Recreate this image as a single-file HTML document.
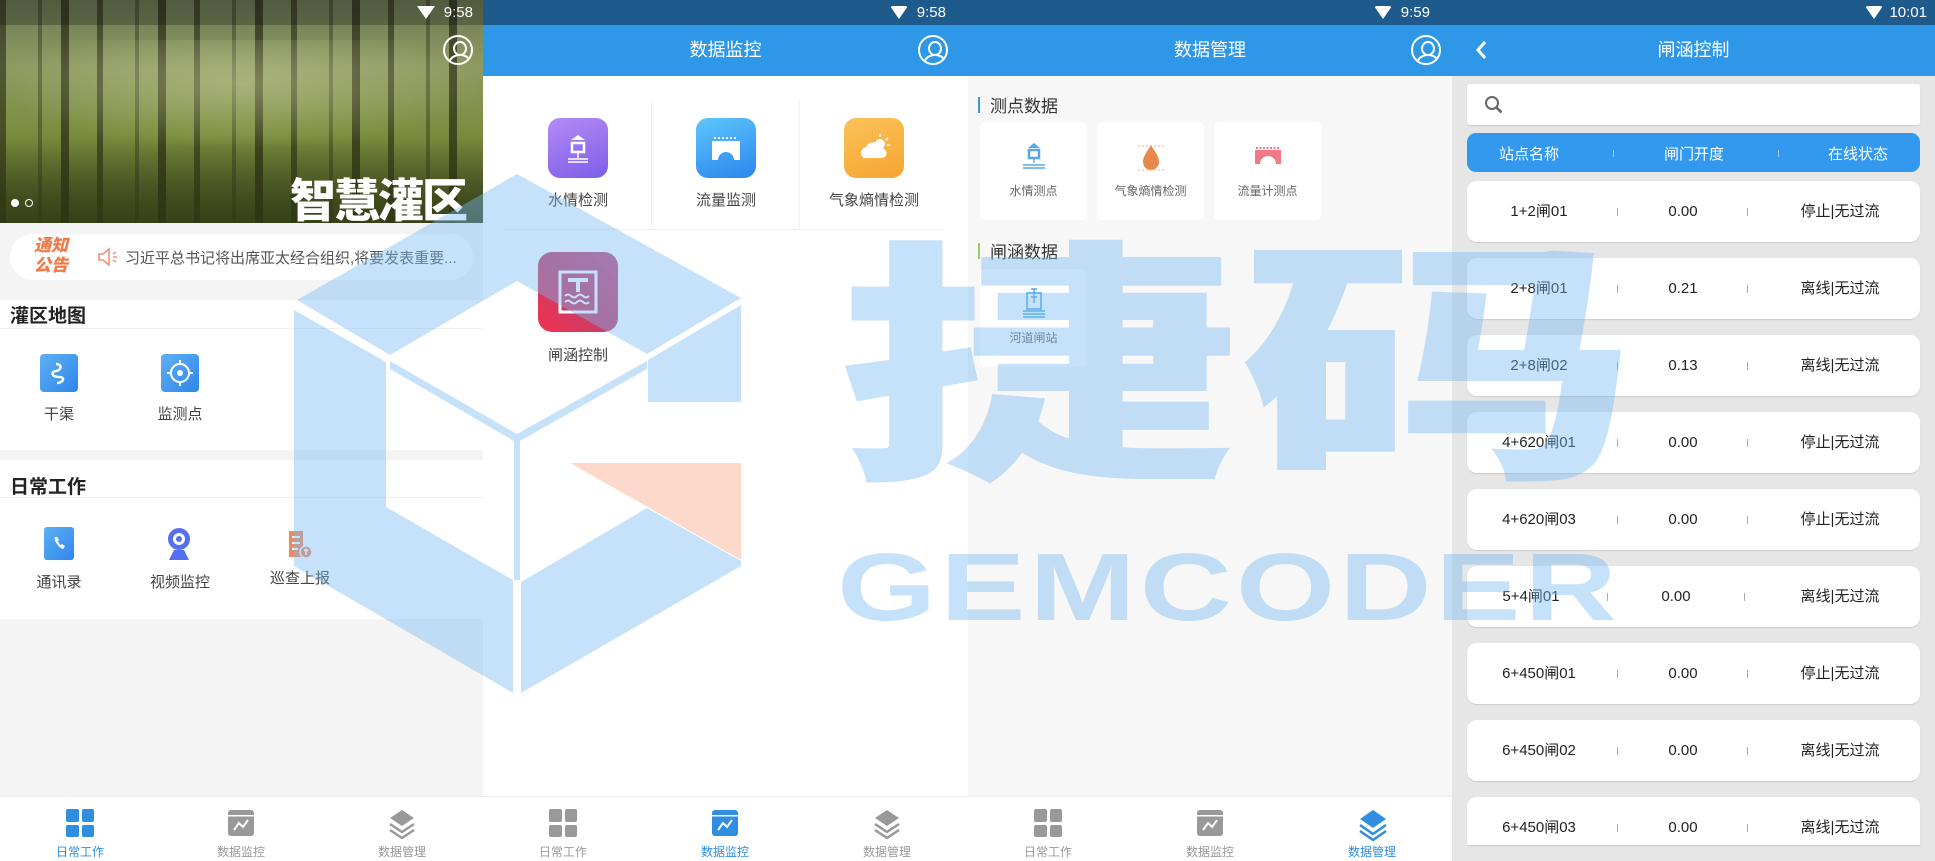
<!DOCTYPE html>
<html><head><meta charset="utf-8"><style>
*{margin:0;padding:0;box-sizing:border-box}
body{width:1935px;height:861px;overflow:hidden;position:relative;background:#fff;font-family:"Liberation Sans","Noto Sans CJK SC",sans-serif;color:#333}
.a{position:absolute}
.panel{position:absolute;top:0;height:861px;overflow:hidden}
.sb{position:absolute;left:0;top:0;width:100%;height:25px;background:#1e5a8c;color:#fff;font-size:15px}
.sb .t{position:absolute;right:10px;top:4px}
.sb .w{position:absolute;right:48px;top:6px;width:0;height:0;border-left:9px solid transparent;border-right:9px solid transparent;border-top:13px solid #fff;border-radius:3px}
.hd{position:absolute;left:0;top:25px;width:100%;height:51px;background:#2f97e8;color:#fff;font-size:18px;text-align:center;line-height:51px}
.av{position:absolute;width:30px;height:30px;border:2px solid #fff;border-radius:50%;overflow:hidden}
.av:before{content:"";position:absolute;left:8px;top:4px;width:10px;height:11px;border:2px solid #fff;border-radius:50%}
.av:after{content:"";position:absolute;left:3px;top:17px;width:20px;height:16px;border:2px solid #fff;border-radius:50%}
.nav{position:absolute;left:0;top:796px;width:100%;height:65px;background:#fff;border-top:1px solid #eee}
.ni{position:absolute;top:12px;width:60px;margin-left:-30px;text-align:center;font-size:12px;color:#999}
.ni .ic{width:28px;height:28px;margin:0 auto 6px;position:relative}
.g4{display:grid;grid-template-columns:1fr 1fr;gap:3px}
.g4 i{display:block;background:#999;border-radius:2px}
.on{color:#2f8ee0}
.on .g4 i{background:#2f8ee0}
.lbl{position:absolute;text-align:center;font-size:15px;color:#444;width:120px;margin-left:-60px}
.row{position:absolute;left:15px;width:453px;height:61px;background:#fff;border-radius:10px;box-shadow:0 1px 1px #ccc;font-size:15px;color:#222}
.row span{position:absolute;top:0;line-height:61px;transform:translateX(-50%);white-space:nowrap}
.row b{position:absolute;top:27px;width:1px;height:8px;background:#aaa}
.hc{position:absolute;top:10px;transform:translateX(-50%);white-space:nowrap}
</style></head><body>

<!-- PANEL 1 -->
<div class="panel" style="left:0;width:483px;background:#f4f4f4">
  <div class="a" style="left:0;top:0;width:483px;height:223px;background:linear-gradient(180deg,#6d7a55 0%,#8f9a62 30%,#7b8c3e 60%,#3f4a1e 100%)"></div>
  <div class="a" style="left:0;top:0;width:483px;height:223px;background:repeating-linear-gradient(90deg,rgba(30,30,15,.55) 0 6px,transparent 6px 38px,rgba(40,40,20,.4) 38px 42px,transparent 42px 61px,rgba(25,25,10,.6) 61px 69px,transparent 69px 97px)"></div>
  <div class="a" style="left:0;top:40px;width:483px;height:110px;background:radial-gradient(ellipse at 50% 40%,rgba(215,220,170,.4),transparent 70%)"></div>
  <div class="a" style="left:0;top:140px;width:483px;height:83px;background:linear-gradient(180deg,transparent,rgba(50,60,20,.65))"></div>
  <div class="a" style="left:0;top:0;width:483px;height:25px;background:rgba(0,0,0,.25);color:#fff;font-size:15px"><span class="a" style="right:10px;top:4px">9:58</span><span class="a" style="right:48px;top:6px;border-left:9px solid transparent;border-right:9px solid transparent;border-top:13px solid #fff"></span></div>
  <div class="av" style="left:443px;top:35px"></div>
  <div class="a" style="left:290px;top:165px;font-size:46px;font-weight:900;color:#fff;letter-spacing:-2px;font-family:'Noto Sans CJK SC',sans-serif">智慧灌区</div>
  <div class="a" style="left:11px;top:199px;width:8px;height:8px;border-radius:50%;background:#fff"></div>
  <div class="a" style="left:25px;top:199px;width:8px;height:8px;border-radius:50%;border:1px solid #fff"></div>
  <div class="a" style="left:10px;top:234px;width:463px;height:46px;background:#fff;border-radius:23px"></div>
  <div class="a" style="left:34px;top:236px;font-size:17px;line-height:20px;font-weight:900;font-style:italic;color:#f07a4a">通知<br>公告</div>
  <svg class="a" style="left:97px;top:247px" width="22" height="20" viewBox="0 0 22 20"><path d="M2 7h4l6-5v16l-6-5H2z" fill="none" stroke="#f0907a" stroke-width="1.6"/><path d="M16 7l3-2M16 13l3 2M16 10h4" stroke="#f0907a" stroke-width="1.4"/></svg>
  <div class="a" style="left:125px;top:247px;font-size:15px;color:#555">习近平总书记将出席亚太经合组织,将要发表重要...</div>
  <div class="a" style="left:0;top:300px;width:483px;height:150px;background:#fff"></div>
  <div class="a" style="left:10px;top:301px;font-size:19px;font-weight:bold;color:#222">灌区地图</div>
  <div class="a" style="left:0;top:328px;width:483px;height:1px;background:#f0f0f0"></div>
  <div class="a" style="left:40px;top:354px;width:38px;height:38px;border-radius:4px;background:linear-gradient(135deg,#5fb0f5,#2e86ea)"><svg width="38" height="38"><path d="M16 10c6 0 6 6 0 7s-4 6 3 6 4 6-2 6" fill="none" stroke="#fff" stroke-width="2.5"/></svg></div>
  <div class="a" style="left:161px;top:354px;width:38px;height:38px;border-radius:4px;background:linear-gradient(135deg,#5fb0f5,#2e86ea)"><svg width="38" height="38"><circle cx="19" cy="19" r="9" fill="none" stroke="#fff" stroke-width="2"/><circle cx="19" cy="19" r="3" fill="#fff"/><path d="M19 6v5M19 27v5M6 19h5M27 19h5" stroke="#fff" stroke-width="2"/></svg></div>
  <div class="lbl" style="left:59px;top:403px">干渠</div>
  <div class="lbl" style="left:180px;top:403px">监测点</div>
  <div class="a" style="left:0;top:460px;width:483px;height:159px;background:#fff"></div>
  <div class="a" style="left:10px;top:472px;font-size:19px;font-weight:bold;color:#222">日常工作</div>
  <div class="a" style="left:0;top:497px;width:483px;height:1px;background:#f0f0f0"></div>
  <div class="a" style="left:44px;top:527px;width:30px;height:33px;border-radius:3px;background:linear-gradient(135deg,#5fb0f5,#2e86ea)"><svg width="30" height="33"><path d="M11 10c-2 3 4 11 8 12l2-3-3-2-1 1c-1 0-3-3-3-4l1-1-2-3z" fill="#fff"/></svg></div>
  <div class="a" style="left:166px;top:527px;width:26px;height:33px"><svg width="26" height="33"><circle cx="13" cy="12" r="11" fill="#5470f0"/><circle cx="13" cy="12" r="6" fill="#fff"/><circle cx="13" cy="12" r="3" fill="#5470f0"/><path d="M3 33l5-10h10l5 10z" fill="#5470f0"/></svg></div>
  <div class="a" style="left:289px;top:531px;width:24px;height:28px"><svg width="24" height="28"><rect x="0" y="0" width="14" height="26" fill="#f08a5a"/><path d="M3 6h8M3 12h8M3 18h6" stroke="#fff" stroke-width="2"/><circle cx="17" cy="21" r="6" fill="#f08a5a" stroke="#fff" stroke-width="1.5"/><path d="M17 24v-6M15 20l2-2 2 2" stroke="#fff" stroke-width="1.5" fill="none"/></svg></div>
  <div class="lbl" style="left:59px;top:571px">通讯录</div>
  <div class="lbl" style="left:180px;top:571px">视频监控</div>
  <div class="lbl" style="left:300px;top:567px">巡查上报</div>
  <div class="nav">
    <div class="ni on" style="left:80px"><div class="ic g4" style="width:28px;height:28px"><i></i><i></i><i></i><i></i></div>日常工作</div>
    <div class="ni" style="left:241px"><div class="ic"><svg width="28" height="28"><rect x="1" y="1" width="26" height="26" rx="3" fill="#999"/><rect x="1" y="6" width="26" height="1.5" fill="#fff"/><path d="M7 21l5-7 4 4 5-7" stroke="#fff" stroke-width="2" fill="none"/></svg></div>数据监控</div>
    <div class="ni" style="left:402px"><div class="ic"><svg width="28" height="30"><path d="M14 1l12 8-12 8-12-8z" fill="#999"/><path d="M2 15l12 8 12-8M2 21l12 8 12-8" stroke="#999" stroke-width="2.5" fill="none"/></svg></div>数据管理</div>
  </div>
</div>

<!-- PANEL 2 -->
<div class="panel" style="left:483px;width:485px;background:#fff">
  <div class="sb"><span class="t" style="right:22px">9:58</span><span class="w" style="right:60px"></span></div>
  <div class="hd">数据监控</div>
  <div class="av" style="left:435px;top:35px"></div>
  <div class="a" style="left:168px;top:100px;width:1px;height:128px;background:#f2f2f2"></div>
  <div class="a" style="left:316px;top:100px;width:1px;height:128px;background:#f2f2f2"></div>
  <div class="a" style="left:21px;top:229px;width:440px;height:1px;background:#f0f0f0"></div>
  <div class="a" style="left:65px;top:118px;width:60px;height:60px;border-radius:12px;background:linear-gradient(160deg,#b58af5,#7d5ee8)"><svg width="60" height="60"><path d="M30 17l7 5H23z" fill="#fff"/><rect x="24" y="25" width="12" height="9" fill="none" stroke="#fff" stroke-width="2.5"/><path d="M30 34v6M20 41h20M20 44h20" stroke="#fff" stroke-width="1.5"/></svg></div>
  <div class="a" style="left:213px;top:118px;width:60px;height:60px;border-radius:12px;background:linear-gradient(160deg,#5ec6fb,#2a86ee)"><svg width="60" height="60"><path d="M16 23h28v19h-6a8 8 0 0 0-16 0h-6z" fill="#fff"/><path d="M18 20h24" stroke="#fff" stroke-width="2" stroke-dasharray="2 2"/></svg></div>
  <div class="a" style="left:361px;top:118px;width:60px;height:60px;border-radius:12px;background:linear-gradient(160deg,#fcc25a,#f5a530)"><svg width="60" height="60"><circle cx="36" cy="26" r="5" fill="#fff"/><path d="M36 16v3M44 20l-2 2M46 27h-3" stroke="#fff" stroke-width="1.6"/><path d="M20 40a6 6 0 0 1 2-11 8 8 0 0 1 15 1 5 5 0 0 1 1 10z" fill="#fff"/></svg></div>
  <div class="lbl" style="left:95px;top:189px">水情检测</div>
  <div class="lbl" style="left:243px;top:189px">流量监测</div>
  <div class="lbl" style="left:391px;top:189px">气象熵情检测</div>
  <div class="a" style="left:55px;top:252px;width:80px;height:80px;border-radius:14px;background:linear-gradient(225deg,#c54f82,#c43f6a 50%,#f2304f)"><svg width="80" height="80"><rect x="22" y="20" width="36" height="40" fill="none" stroke="#fff" stroke-width="3"/><path d="M30 28h20M40 28v12" stroke="#fff" stroke-width="4"/><path d="M27 44q3-3 6 0t6 0 6 0 6 0M27 50q3-3 6 0t6 0 6 0 6 0" stroke="#fff" stroke-width="2" fill="none"/></svg></div>
  <div class="lbl" style="left:95px;top:344px">闸涵控制</div>
  <div class="nav">
    <div class="ni" style="left:80px"><div class="ic g4" style="width:28px;height:28px"><i></i><i></i><i></i><i></i></div>日常工作</div>
    <div class="ni on" style="left:242px"><div class="ic"><svg width="28" height="28"><rect x="1" y="1" width="26" height="26" rx="3" fill="#2f8ee0"/><rect x="1" y="6" width="26" height="1.5" fill="#fff"/><path d="M7 21l5-7 4 4 5-7" stroke="#fff" stroke-width="2" fill="none"/></svg></div>数据监控</div>
    <div class="ni" style="left:404px"><div class="ic"><svg width="28" height="30"><path d="M14 1l12 8-12 8-12-8z" fill="#999"/><path d="M2 15l12 8 12-8M2 21l12 8 12-8" stroke="#999" stroke-width="2.5" fill="none"/></svg></div>数据管理</div>
  </div>
</div>

<!-- PANEL 3 -->
<div class="panel" style="left:968px;width:484px;background:#f7f7f7">
  <div class="sb"><span class="t" style="right:22px">9:59</span><span class="w" style="right:60px"></span></div>
  <div class="hd">数据管理</div>
  <div class="av" style="left:443px;top:35px"></div>
  <div class="a" style="left:10px;top:97px;width:2px;height:16px;background:#3a9ae8"></div>
  <div class="a" style="left:22px;top:92px;font-size:17px;color:#333">测点数据</div>
  <div class="a" style="left:12px;top:122px;width:107px;height:98px;background:#fff;border-radius:5px"></div>
  <div class="a" style="left:129px;top:122px;width:107px;height:98px;background:#fff;border-radius:5px"></div>
  <div class="a" style="left:246px;top:122px;width:107px;height:98px;background:#fff;border-radius:5px"></div>
  <svg class="a" style="left:52px;top:142px" width="28" height="28"><path d="M14 1l6 5H8z" fill="#5aa6ee"/><rect x="9" y="8" width="10" height="8" fill="none" stroke="#5aa6ee" stroke-width="2.5"/><path d="M14 16v5M3 23h22M3 26h22" stroke="#5aa6ee" stroke-width="1.4"/></svg>
  <svg class="a" style="left:168px;top:142px" width="30" height="30"><path d="M15 3c-5 8-8 12-8 17a8 8 0 0 0 16 0c0-5-3-9-8-17z" fill="#e8884a"/><path d="M2 4h26M2 28h26" stroke="#f0b080" stroke-width="1" stroke-dasharray="2 2"/></svg>
  <svg class="a" style="left:285px;top:145px" width="30" height="22"><path d="M2 5h26v14h-5a8 8 0 0 0-16 0H2z" fill="#f07a85"/><path d="M3 3h24" stroke="#f07a85" stroke-width="2" stroke-dasharray="2 1.5"/></svg>
  <div class="a" style="left:12px;top:182px;width:107px;text-align:center;font-size:12px;color:#666">水情测点</div>
  <div class="a" style="left:129px;top:182px;width:107px;text-align:center;font-size:12px;color:#666">气象熵情检测</div>
  <div class="a" style="left:246px;top:182px;width:107px;text-align:center;font-size:12px;color:#666">流量计测点</div>
  <div class="a" style="left:10px;top:243px;width:2px;height:16px;background:#9acd6a"></div>
  <div class="a" style="left:22px;top:238px;font-size:17px;color:#333">闸涵数据</div>
  <div class="a" style="left:12px;top:269px;width:107px;height:98px;background:#fff;border-radius:5px"></div>
  <svg class="a" style="left:52px;top:287px" width="28" height="32"><rect x="7" y="6" width="14" height="16" fill="none" stroke="#4aa8e8" stroke-width="1.6"/><path d="M11 2h6M14 2v14M11 10h6M3 24h22M3 27h22M3 30h22" stroke="#4aa8e8" stroke-width="1.4"/></svg>
  <div class="a" style="left:12px;top:329px;width:107px;text-align:center;font-size:12px;color:#666">河道闸站</div>
  <div class="nav">
    <div class="ni" style="left:80px"><div class="ic g4" style="width:28px;height:28px"><i></i><i></i><i></i><i></i></div>日常工作</div>
    <div class="ni" style="left:242px"><div class="ic"><svg width="28" height="28"><rect x="1" y="1" width="26" height="26" rx="3" fill="#999"/><rect x="1" y="6" width="26" height="1.5" fill="#fff"/><path d="M7 21l5-7 4 4 5-7" stroke="#fff" stroke-width="2" fill="none"/></svg></div>数据监控</div>
    <div class="ni on" style="left:404px"><div class="ic"><svg width="30" height="32"><path d="M15 1l13 9-13 9-13-9z" fill="#2f8ee0"/><path d="M2 16l13 9 13-9M2 22l13 9 13-9" stroke="#2f8ee0" stroke-width="2.5" fill="none"/></svg></div>数据管理</div>
  </div>
</div>

<!-- PANEL 4 -->
<div class="panel" style="left:1452px;width:483px;background:#e6e6e6">
  <div class="sb"><span class="t" style="right:8px">10:01</span><span class="w" style="right:52px"></span></div>
  <div class="hd">闸涵控制</div>
  <svg class="a" style="left:22px;top:39px" width="14" height="22"><path d="M11 3L4 11l7 8" stroke="#fff" stroke-width="3" fill="none"/></svg>
  <div class="a" style="left:15px;top:84px;width:453px;height:41px;background:#fff;border-radius:3px;box-shadow:0 1px 1px #ccc"></div>
  <svg class="a" style="left:32px;top:95px" width="20" height="20"><circle cx="8" cy="8" r="6" fill="none" stroke="#666" stroke-width="2"/><path d="M12.5 12.5l5 5" stroke="#666" stroke-width="2.5"/></svg>
  <div class="a" style="left:15px;top:133px;width:453px;height:39px;background:#3399ee;border-radius:9px;color:#fff;font-size:15px">
    <span class="hc" style="left:62px">站点名称</span><b class="a" style="left:146px;top:17px;width:1px;height:7px;background:#9cf"></b>
    <span class="hc" style="left:227px">闸门开度</span><b class="a" style="left:311px;top:17px;width:1px;height:7px;background:#9cf"></b>
    <span class="hc" style="left:391px">在线状态</span>
  </div>
  <div class="row" style="top:181px"><span style="left:72px">1+2闸01</span><b style="left:150px"></b><span style="left:216px">0.00</span><b style="left:280px"></b><span style="left:373px">停止|无过流</span></div>
  <div class="row" style="top:258px"><span style="left:72px">2+8闸01</span><b style="left:150px"></b><span style="left:216px">0.21</span><b style="left:280px"></b><span style="left:373px">离线|无过流</span></div>
  <div class="row" style="top:335px"><span style="left:72px">2+8闸02</span><b style="left:150px"></b><span style="left:216px">0.13</span><b style="left:280px"></b><span style="left:373px">离线|无过流</span></div>
  <div class="row" style="top:412px"><span style="left:72px">4+620闸01</span><b style="left:150px"></b><span style="left:216px">0.00</span><b style="left:280px"></b><span style="left:373px">停止|无过流</span></div>
  <div class="row" style="top:489px"><span style="left:72px">4+620闸03</span><b style="left:150px"></b><span style="left:216px">0.00</span><b style="left:280px"></b><span style="left:373px">停止|无过流</span></div>
  <div class="row" style="top:566px"><span style="left:64px">5+4闸01</span><b style="left:140px"></b><span style="left:209px">0.00</span><b style="left:277px"></b><span style="left:373px">离线|无过流</span></div>
  <div class="row" style="top:643px"><span style="left:72px">6+450闸01</span><b style="left:150px"></b><span style="left:216px">0.00</span><b style="left:280px"></b><span style="left:373px">停止|无过流</span></div>
  <div class="row" style="top:720px"><span style="left:72px">6+450闸02</span><b style="left:150px"></b><span style="left:216px">0.00</span><b style="left:280px"></b><span style="left:373px">离线|无过流</span></div>
  <div class="row" style="top:797px;height:48px;border-radius:10px 10px 0 0"><span style="left:72px">6+450闸03</span><b style="left:150px"></b><span style="left:216px">0.00</span><b style="left:280px"></b><span style="left:373px">离线|无过流</span></div>
</div>

<!-- WATERMARK -->
<svg class="a" style="left:0;top:0;pointer-events:none" width="1935" height="861">
  <g fill="rgba(120,185,242,0.42)">
    <path d="M297 300L517 174L741 298L647 354L517 281L390 355Z"/>
    <path d="M294 310L386 362V507L513 580V693L294 566Z"/>
    <path d="M390 361L517 434L647 361L647 369L520 441V580H514V441L390 369Z"/>
    <path d="M648 360L741 305V402H648Z"/>
    <path d="M521 582L647 508L741 561V566L521 693Z"/>
  </g>
  <path d="M570 463H741V560Z" fill="rgba(248,170,140,0.45)"/>
  <text x="0" y="0" font-size="255" font-family="'Noto Sans CJK SC',sans-serif" font-weight="900" fill="rgba(120,185,242,0.42)" transform="translate(838 458) scale(1.57 1)">捷码</text>
  <text x="0" y="0" font-size="96" font-weight="bold" font-family="'Liberation Sans',sans-serif" fill="rgba(120,185,242,0.42)" transform="translate(837 620) scale(1.33 1)" letter-spacing="3">GEMCODER</text>
</svg>
</body></html>
